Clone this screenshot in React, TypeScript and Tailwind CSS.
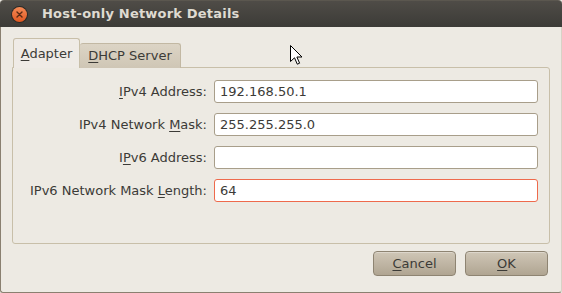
import React from "react";

const U = ({ children }: { children: React.ReactNode }) => (
  <span className="underline underline-offset-2 decoration-1">{children}</span>
);

function Row({ label, value, error }: { label: React.ReactNode; value: string; error?: boolean }) {
  return (
    <div className="flex items-center h-[23px]">
      <div className="w-[201px] text-right pr-[7px] whitespace-nowrap">{label}</div>
      {error ? (
        <div className="flex-1 h-[23px] rounded-[3px] bg-white border border-solid border-[#ee6a4c] flex items-center pl-[5px]">
          {value}
        </div>
      ) : (
        <div className="flex-1 h-[23px] rounded-[3px] bg-white border border-solid border-[#a89e8a] flex items-center pl-[5px]">
          {value}
        </div>
      )}
    </div>
  );
}

export default function App() {
  return (
    <div
      className="w-[562px] h-[293px] overflow-hidden flex flex-col bg-[#edeae3] text-[13px] text-[#3c3b37] relative"
      style={{ fontFamily: '"DejaVu Sans", sans-serif' }}
    >
      {/* title bar */}
      <div className="h-[27px] shrink-0 bg-gradient-to-b from-[#4f4c47] to-[#3c3b37] flex items-center border-t border-[#5b574f] rounded-t-[4px]">
        <div className="ml-[11px] w-[17px] h-[17px] rounded-full bg-[#2b2a27] flex items-center justify-center">
          <div className="w-[15px] h-[15px] rounded-full bg-gradient-to-b from-[#f58a55] to-[#e0571f] flex items-center justify-center">
            <svg width="7" height="7" viewBox="0 0 7 7">
              <path d="M1 1 L6 6 M6 1 L1 6" stroke="#5a2a14" strokeWidth="1.4" strokeLinecap="round" />
            </svg>
          </div>
        </div>
        <div className="ml-[14px] font-bold text-[#dfdbd2] text-[13px] tracking-[0.2px]">Host-only Network Details</div>
      </div>

      {/* body */}
      <div className="flex-1 flex flex-col border-l border-r border-b border-[#8a8070] rounded-b-[3px] border-r-[#d8d2c6]">
        <div className="pl-[11px] pr-[11px] pt-[11px]">
          {/* tabs */}
          <div className="flex items-end h-[30px] relative z-10">
            <div className="ml-[1px] w-[67px] h-[30px] bg-[#efebe6] border border-b-0 border-[#c8bfa9] rounded-t-[3px] flex items-center justify-center pt-[1px]">
              <span><U>A</U>dapter</span>
            </div>
            <div className="w-[101px] h-[25px] bg-gradient-to-b from-[#dcd4c5] to-[#cfc6b5] border border-b-0 border-[#c2b8a3] rounded-t-[3px] flex items-center justify-center border-l-0">
              <span><U>D</U>HCP Server</span>
            </div>
          </div>
          {/* panel */}
          <div className="-mt-[1px] h-[177px] border border-[#c8bfa9] rounded-b-[3px] rounded-tr-[3px] pt-[12px] pr-[11px] flex flex-col gap-[10px]">
            <Row label={<><U>I</U>Pv4 Address:</>} value="192.168.50.1" />
            <Row label={<>IPv4 Network <U>M</U>ask:</>} value="255.255.255.0" />
            <Row label={<>I<U>P</U>v6 Address:</>} value="" />
            <Row label={<>IPv6 Network Mask <U>L</U>ength:</>} value="64" error />
          </div>
        </div>
        {/* buttons */}
        <div className="flex justify-end gap-[9px] pr-[13px] pt-[7px]">
          <button className="w-[83px] h-[25px] rounded-[4px] border border-[#8e8472] bg-gradient-to-b from-[#cfc6b6] to-[#b0a592] text-[#3c3b37] shadow-[inset_0_1px_0_rgba(255,255,255,0.3)]">
            <U>C</U>ancel
          </button>
          <button className="w-[83px] h-[25px] rounded-[4px] border border-[#8e8472] bg-gradient-to-b from-[#cfc6b6] to-[#b0a592] text-[#3c3b37] shadow-[inset_0_1px_0_rgba(255,255,255,0.3)]">
            <U>O</U>K
          </button>
        </div>
      </div>

      {/* mouse cursor */}
      <svg className="absolute left-[290px] top-[45px]" width="13" height="21" viewBox="0 0 13 21">
        <path
          d="M0.5 0.5 L0.5 16.5 L4.5 12.8 L7.3 19.2 L9.6 18.2 L6.9 12 L12 12 Z"
          fill="white"
          stroke="black"
          strokeWidth="1"
          strokeLinejoin="round"
        />
      </svg>
    </div>
  );
}
